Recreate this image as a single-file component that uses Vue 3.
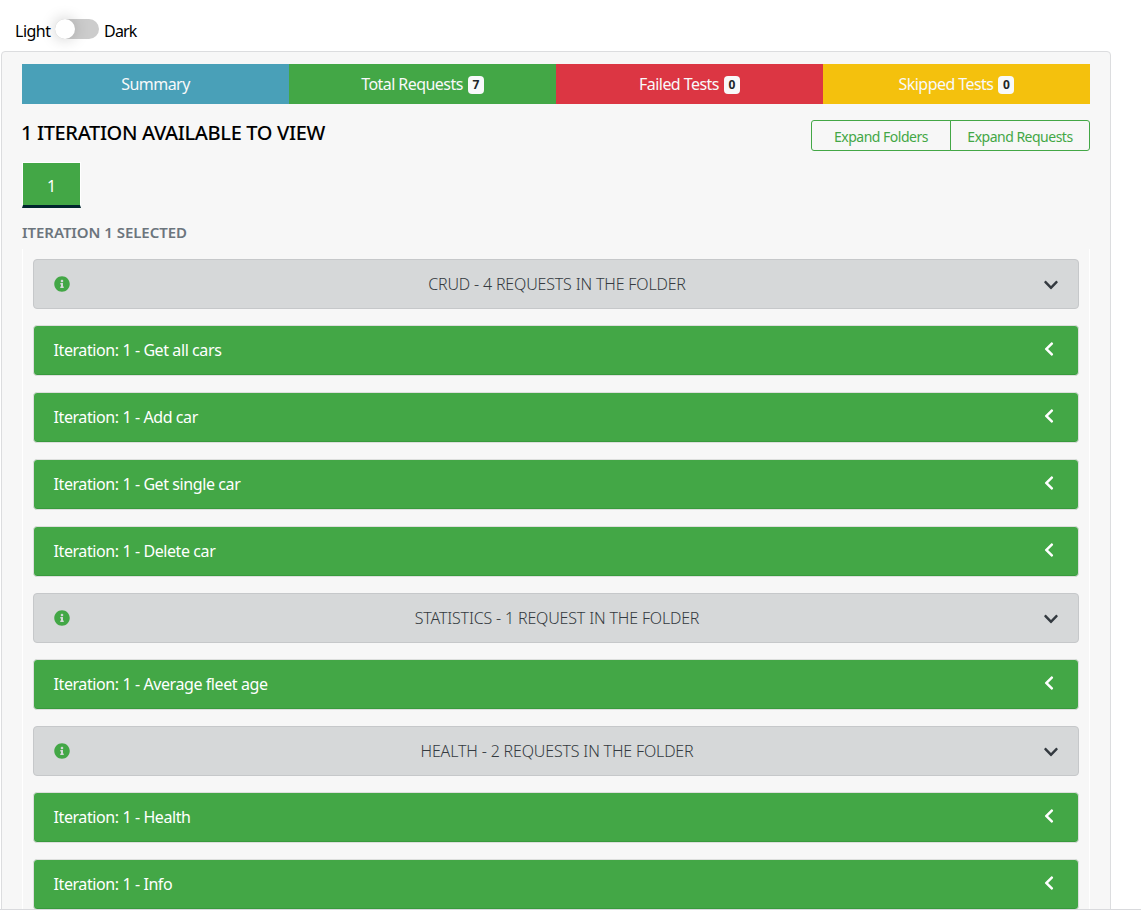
<script setup>
const tabs = [
  { label: 'Summary', kind: 'info' },
  { label: 'Total Requests', kind: 'success', count: 7 },
  { label: 'Failed Tests', kind: 'danger', count: 0 },
  { label: 'Skipped Tests', kind: 'warning', count: 0 },
]
const rows = [
  { folder: true, text: 'CRUD - 4 REQUESTS IN THE FOLDER' },
  { text: 'Iteration: 1 - Get all cars' },
  { text: 'Iteration: 1 - Add car' },
  { text: 'Iteration: 1 - Get single car' },
  { text: 'Iteration: 1 - Delete car' },
  { folder: true, text: 'STATISTICS - 1 REQUEST IN THE FOLDER' },
  { text: 'Iteration: 1 - Average fleet age' },
  { folder: true, text: 'HEALTH - 2 REQUESTS IN THE FOLDER' },
  { text: 'Iteration: 1 - Health' },
  { text: 'Iteration: 1 - Info' },
]
</script>

<template>
  <div class="page">
    <div class="theme">
      <span class="light">Light</span>
      <span class="switch"><span class="knob"></span></span>
      <span class="dark">Dark</span>
    </div>
    <main class="panel">
      <nav class="tabs">
        <a v-for="t in tabs" :key="t.label" class="tab" :class="t.kind">
          <span>{{ t.label }}</span><span v-if="t.count !== undefined" class="badge">{{ t.count }}</span>
        </a>
      </nav>
      <div class="head">
        <h4>1 ITERATION AVAILABLE TO VIEW</h4>
        <div class="group">
          <button>Expand Folders</button>
          <button>Expand Requests</button>
        </div>
      </div>
      <div class="pager">1</div>
      <h5>ITERATION 1 SELECTED</h5>
      <section class="list">
        <div v-for="r in rows" :key="r.text" class="row" :class="r.folder ? 'folder' : 'request'">
          <template v-if="r.folder">
            <svg class="info-icon" width="16" height="16" viewBox="0 0 512 512">
              <path fill="#43a746" d="M256 8C119 8 8 119 8 256s111 248 248 248 248-111 248-248S393 8 256 8zm0 110c23 0 42 19 42 42s-19 42-42 42-42-19-42-42 19-42 42-42zm56 254c0 7-5 12-12 12h-88c-7 0-12-5-12-12v-24c0-7 5-12 12-12h12v-64h-12c-7 0-12-5-12-12v-24c0-7 5-12 12-12h64c7 0 12 5 12 12v100h12c7 0 12 5 12 12z" />
            </svg>
            <span class="title">{{ r.text }}</span>
            <svg class="down" width="14" height="16" viewBox="0 0 448 512">
              <path fill="#343a40" d="M207 382 12.700 187c-9-9-9-24 0-34l22.700-22.700c9-9 24-9 34 0L224 284l154-154c9-9 24-9 34 0l22.700 22.700c9 9 9 24 0 34L241 382c-9 9-25 9-34 0z" />
            </svg>
          </template>
          <template v-else>
            <span class="title">{{ r.text }}</span>
            <svg class="left" width="10" height="16" viewBox="0 0 320 512">
              <path fill="#fff" d="M34.500 239 229 44.700c9-9 24-9 34 0l22.700 22.700c9 9 9 24 0 34L131.500 256l154 155c9 9 9 24 0 34L263 467.300c-9 9-24 9-34 0L34.500 273c-9-9-9-25 0-34z" />
            </svg>
          </template>
        </div>
      </section>
    </main>
    <div class="edge"></div>
  </div>
</template>

<style>
body { margin: 0; overflow: hidden; background: #fff; }
</style>

<style scoped>
* { box-sizing: border-box; }
.page {
  position: relative; width: 1141px; height: 910px; overflow: hidden;
  font: 16px/24px "Noto Sans", "Open Sans", sans-serif; color: #000; white-space: nowrap;
}
.theme { height: 51px; padding: 19px 0 0 15px; display: flex; }
.theme > span { display: block; }
.light { width: 36px; letter-spacing: -0.5px; }
.dark { margin-left: 5px; letter-spacing: -0.8px; }
.switch { width: 44px; height: 20px; margin-left: 4px; background: #ccc; border-radius: 10px; }
.knob { display: block; width: 20px; height: 20px; border-radius: 50%; background: #fff; box-shadow: 0 0 15px rgba(0, 0, 0, 0.22); }
.panel { width: 1110px; height: 960px; margin-left: 1px; padding: 12px 20px; background: #f7f7f7; border: 1px solid #dcdddf; border-radius: 4px; }
.tabs { display: grid; grid-template-columns: repeat(4, 267px); height: 40px; }
.tab { display: flex; align-items: center; justify-content: center; color: #f8f9fa; letter-spacing: -0.55px; }
.info { background: #49a0b8; }
.success { background: #43a746; }
.danger { background: #dc3643; }
.warning { background: #f4c10d; }
.badge { width: 16px; height: 18px; margin: 2px 0 0 5px; border-radius: 4px; background: #f8f9fa; color: #212529; font-size: 12px; line-height: 18px; font-weight: 700; text-align: center; letter-spacing: 0; }
.head { display: flex; justify-content: space-between; height: 59px; }
h4 { margin: 17px 0 0 -1px; font-size: 20px; line-height: 24px; font-weight: 500; letter-spacing: -0.35px; }
.group { display: flex; margin-top: 16px; height: 31px; }
button { width: 140px; padding: 1px 0 0; border: 1px solid #43a746; background: transparent; color: #43a746; font: 14px/21px "Noto Sans", sans-serif; border-radius: 3px 0 0 3px; letter-spacing: -0.5px; }
button + button { margin-left: -1px; border-radius: 0 3px 3px 0; }
.pager { width: 59px; height: 46px; margin-top: -1px; background: #43a746; border: 1px solid #fff; border-bottom: 3px solid #00252e; color: #fff; text-align: center; line-height: 46px; }
h5 { margin: 12px 0 5px; font-size: 15px; line-height: 24px; font-weight: 600; color: #6c757d; letter-spacing: -0.05px; }
.list { border: solid #fff; border-width: 0 1px; padding: 10px 10px 0; display: flex; flex-direction: column; gap: 16px; }
.row { display: flex; align-items: center; flex: none; border-radius: 4px; }
.folder { height: 50px; padding: 0 20px; justify-content: space-between; background: #d6d8d9; border: 1px solid #c6c8ca; color: #343a40; }
.folder .title { font-weight: 300; letter-spacing: -0.17px; }
.down { margin-top: 1px; }
.request { height: 51px; padding: 0 24px 0 19.5px; justify-content: space-between; background: #43a746; border: 1px solid #dddfdd; box-shadow: inset 0 -1px #389a3d; color: #fff; }
.request .title { margin-top: -1px; letter-spacing: -0.41px; }
.left { margin-top: -4px; }
.edge { position: absolute; left: 0; right: 0; bottom: 0; height: 1px; background: #d9dadd; }
</style>
